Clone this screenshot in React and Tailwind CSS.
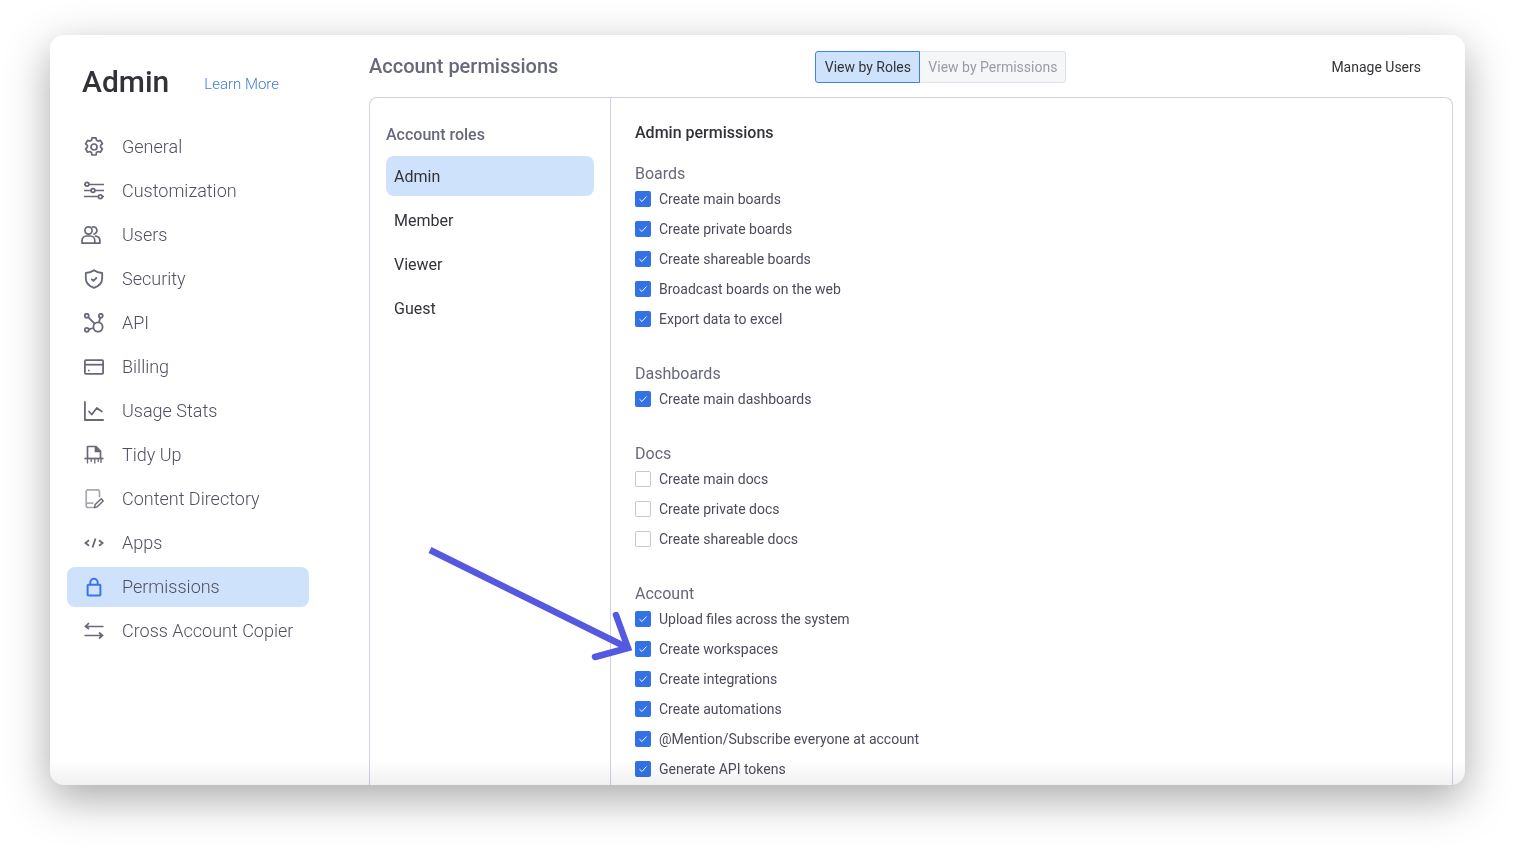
import React from "react";

const GearIcon = () => (
  <svg width="20" height="20" viewBox="0 0 20 20" fill="none" stroke="currentColor" strokeWidth="1.7" strokeLinejoin="round">
    <path d="M8 .9h4l.5 2.3 1.6.9 2.3-.7 2 3.4-1.8 1.6v1.8l1.8 1.6-2 3.4-2.3-.7-1.6.9-.5 2.6H8l-.5-2.6-1.6-.9-2.3.7-2-3.4 1.8-1.6V8.4L1.6 6.8l2-3.4 2.3.7 1.6-.9z" />
    <circle cx="10" cy="10" r="3" />
  </svg>
);

const SlidersIcon = () => (
  <svg width="20" height="20" viewBox="0 0 20 20" fill="none" stroke="currentColor" strokeWidth="1.7">
    <path d="M5 3.5h15M0 3.5h1.2M0 9.5h7M11 9.5h9M0 15.5h14.5M18.2 15.5H20" />
    <circle cx="3" cy="3.3" r="1.9" />
    <circle cx="9" cy="9.5" r="1.9" />
    <circle cx="16.3" cy="15.7" r="1.9" />
  </svg>
);

const UsersIcon = () => (
  <svg width="20" height="20" viewBox="0 0 20 20" fill="none" stroke="currentColor" strokeWidth="1.7" strokeLinejoin="round" strokeLinecap="round">
    <circle cx="7.5" cy="5.5" r="3.6" />
    <path d="M1 18.2v-2.6c0-2.8 2-4.6 4.3-4.6h4.2c2.4 0 4.3 2 4.3 4.6v2.6z" />
    <path d="M11.3 2a3.6 3.6 0 1 1 1.6 7M14.5 11.2c2.6.2 4.4 2 4.4 4.5v2.5h-5" />
  </svg>
);

const ShieldIcon = () => (
  <svg width="20" height="20" viewBox="0 0 20 20" fill="none" stroke="currentColor" strokeWidth="1.8" strokeLinecap="round" strokeLinejoin="round">
    <path d="M10 1.2c2.4 1.8 5 2.6 8.2 2.8v5.2c0 4.4-3.2 7.8-8.2 9.6-5-1.8-8.2-5.2-8.2-9.6V4C5 3.8 7.6 3 10 1.2z" />
    <path d="M7.8 10.4l1.6 1.4 2.9-2.8" />
  </svg>
);

const ApiIcon = () => (
  <svg width="20" height="20" viewBox="0 0 20 20" fill="none" stroke="currentColor" strokeWidth="1.8">
    <circle cx="2.8" cy="2.8" r="2" />
    <circle cx="2.8" cy="16.8" r="2" />
    <circle cx="16.8" cy="2.8" r="2" />
    <circle cx="14" cy="14" r="4.6" />
    <path d="M4.3 4.3l6.4 6.4M4.8 16.4l4.6-1.4M16.2 4.8l-1.2 4.6" />
  </svg>
);

const BillingIcon = () => (
  <svg width="20" height="20" viewBox="0 0 20 20" fill="none" stroke="currentColor" strokeWidth="1.8">
    <rect x="0.9" y="3.2" width="18.2" height="13.6" rx="1" />
    <path d="M1 7.7h18" />
    <path d="M4 13.5h1.6" strokeWidth="1.4" />
  </svg>
);

const ChartIcon = () => (
  <svg width="20" height="20" viewBox="0 0 20 20" fill="none" stroke="currentColor" strokeWidth="1.8" strokeLinecap="round" strokeLinejoin="round">
    <path d="M0.9 1v18h18.2" />
    <path d="M5 10.5l2.8 3 5-6.5 5 3.5" />
  </svg>
);

const TidyIcon = () => (
  <svg width="20" height="20" viewBox="0 0 20 20" fill="none" stroke="currentColor" strokeWidth="1.7" strokeLinejoin="round">
    <path d="M3.5 13V1.5h8.5l4.5 4.5v7" />
    <path d="M11.5 1.5v5h5" fill="currentColor" />
    <path d="M0.5 13.5h19" />
    <path d="M3.5 14v4.5M7.2 14v3M10.8 14v4.5M14.2 14v3M17 14v4" strokeWidth="1.3" />
  </svg>
);

const ContentIcon = () => (
  <svg width="20" height="20" viewBox="0 0 20 20" fill="none" strokeLinejoin="round">
    <path d="M10 18.5H4.2a2 2 0 0 1-2-2V2.8a2 2 0 0 1 2-2h9.3a2 2 0 0 1 2 2v5.5" stroke="#a6a8b5" strokeWidth="1.7" />
    <path d="M2.5 14.2h7" stroke="#a6a8b5" strokeWidth="1.7" />
    <path d="M10.5 18.7l.7-3.2 6-5.7 2 2.2-6 5.8z" stroke="#676879" strokeWidth="1.4" />
  </svg>
);

const CodeIcon = () => (
  <svg width="20" height="20" viewBox="0 0 20 20" fill="none" stroke="currentColor" strokeWidth="1.8">
    <path d="M5 7.2l-3.6 2.8L5 12.8M15 7.2l3.6 2.8-3.6 2.8M11.5 5.5l-3 9" />
  </svg>
);

const LockIcon = () => (
  <svg width="20" height="20" viewBox="0 0 20 20" fill="none" stroke="#3b74e8" strokeWidth="2">
    <rect x="3.6" y="7.8" width="12.8" height="10.6" rx="0.6" />
    <path d="M6.3 7.8V5.5a3.7 3.7 0 0 1 7.4 0v2.3" />
  </svg>
);

const SwapIcon = () => (
  <svg width="20" height="20" viewBox="0 0 20 20" fill="none" stroke="currentColor" strokeWidth="1.7">
    <path d="M19.5 5.5H1.5M5 2L1.5 5.5 5 8" />
    <path d="M0.5 14.5h18M15 11.5l3.5 3-3.5 3" />
  </svg>
);

const CheckBox = ({ checked }) =>
  checked ? (
    <span className="flex h-4 w-4 shrink-0 items-center justify-center rounded-[2px] bg-[#3271e6]">
      <svg width="10" height="10" viewBox="0 0 10 10" fill="none" stroke="#fff" strokeWidth="1">
        <path d="M1.5 5.2l2.4 2.3 4.6-5" />
      </svg>
    </span>
  ) : (
    <span className="h-4 w-4 shrink-0 rounded-[2px] border border-[#c5c7d4] bg-white" />
  );

const navItems = [
  { label: "General", icon: <GearIcon /> },
  { label: "Customization", icon: <SlidersIcon /> },
  { label: "Users", icon: <UsersIcon />, shift: true },
  { label: "Security", icon: <ShieldIcon /> },
  { label: "API", icon: <ApiIcon /> },
  { label: "Billing", icon: <BillingIcon /> },
  { label: "Usage Stats", icon: <ChartIcon /> },
  { label: "Tidy Up", icon: <TidyIcon /> },
  { label: "Content Directory", icon: <ContentIcon /> },
  { label: "Apps", icon: <CodeIcon /> },
  { label: "Permissions", icon: <LockIcon />, active: true },
  { label: "Cross Account Copier", icon: <SwapIcon /> },
];

const roles = ["Admin", "Member", "Viewer", "Guest"];

const groups = [
  {
    title: "Boards",
    items: [
      ["Create main boards", true],
      ["Create private boards", true],
      ["Create shareable boards", true],
      ["Broadcast boards on the web", true],
      ["Export data to excel", true],
    ],
  },
  { title: "Dashboards", items: [["Create main dashboards", true]] },
  {
    title: "Docs",
    items: [
      ["Create main docs", false],
      ["Create private docs", false],
      ["Create shareable docs", false],
    ],
  },
  {
    title: "Account",
    items: [
      ["Upload files across the system", true],
      ["Create workspaces", true],
      ["Create integrations", true],
      ["Create automations", true],
      ["@Mention/Subscribe everyone at account", true],
      ["Generate API tokens", true],
    ],
  },
];

const App = () => {
  return (
    <div className="h-[850px] w-[1515px] overflow-hidden bg-white px-[50px] pt-[35px] font-['Roboto',sans-serif]">
      <div className="relative flex h-[750px] overflow-hidden rounded-[14px] bg-white shadow-[0_14px_44px_rgba(0,0,0,0.34)]">
        {/* Sidebar */}
        <aside className="w-[319px] shrink-0 pl-[17px]">
          <div className="flex h-[92px] items-start pl-[15px] pt-[28px]">
            <h1 className="text-[30px] font-medium leading-[38px] text-[#323338]">Admin</h1>
            <a className="ml-[35px] mt-[10px] text-[15px] font-light leading-[22px] text-[#3f7ed4]">Learn More</a>
          </div>
          <nav className="flex w-[242px] flex-col gap-1">
            {navItems.map((item) => (
              <div
                key={item.label}
                className={`flex h-10 items-center rounded-lg text-[#676879] ${item.active ? "bg-[#cfe2fb]" : ""}`}
              >
                <span className={`flex w-5 justify-center ${item.shift ? "ml-[14px] mr-[21px]" : "ml-[17px] mr-[18px]"}`}>
                  {item.icon}
                </span>
                <span className="text-[18px] font-light leading-6 text-[#4f5060]">{item.label}</span>
              </div>
            ))}
          </nav>
        </aside>

        {/* Main */}
        <main className="flex min-w-0 flex-1 flex-col pr-3">
          <header className="relative flex h-[62px] shrink-0 items-start">
            <h2 className="mt-[18px] text-[20px] font-medium leading-[26px] text-[#676879]">Account permissions</h2>
            <div className="ml-[257px] mt-4 flex h-8 text-[14px] leading-5">
              <button className="w-[105px] rounded-l-[3px] border border-[#3f7fe8] bg-[#cfe2fb] text-[#323338]">
                View by Roles
              </button>
              <button className="w-[146px] rounded-r-[3px] border border-l-0 border-[#e0e1ea] bg-[#f5f6f8] text-[#9a9ba5]">
                View by Permissions
              </button>
            </div>
            <a className="ml-[265px] mt-[22px] text-[14px] leading-5 text-[#323338]">Manage Users</a>
          </header>

          <div className="flex min-h-0 flex-1 rounded-t-lg border border-b-0 border-[#d0d1e2]">
            <div className="w-[241px] shrink-0 border-r border-[#d0d1e2] px-4 pt-[27px]">
              <h3 className="text-[16px] font-medium leading-5 text-[#676879]">Account roles</h3>
              <div className="mt-[11px] flex flex-col gap-1">
                {roles.map((role, index) => (
                  <div
                    key={role}
                    className={`flex h-10 items-center rounded-lg px-2 pt-px text-[16px] text-[#323338] ${index === 0 ? "bg-[#cfe2fb]" : ""}`}
                  >
                    {role}
                  </div>
                ))}
              </div>
            </div>

            <div className="min-w-0 flex-1 pl-6 pt-[25px]">
              <h3 className="text-[16px] font-medium leading-5 text-[#323338]">Admin permissions</h3>
              <div className="mt-[21px] flex flex-col gap-[30px]">
                {groups.map((group) => (
                  <section key={group.title}>
                    <h4 className="text-[16px] leading-5 text-[#676879]">{group.title}</h4>
                    <ul>
                      {group.items.map(([label, checked]) => (
                        <li key={label} className="flex h-[30px] items-center gap-2 text-[14px] text-[#4b4c5a]">
                          <CheckBox checked={checked} />
                          {label}
                        </li>
                      ))}
                    </ul>
                  </section>
                ))}
              </div>
            </div>
          </div>
        </main>

        {/* arrow annotation */}
        <svg className="absolute left-[375px] top-[505px]" width="215" height="125" viewBox="0 0 215 125" fill="none" stroke="#5558e0" strokeWidth="6.5">
          <path d="M5 10l198 98" />
          <path d="M191 75l12 33-33 9" strokeLinecap="round" />
        </svg>

        {/* soft fade along the bottom edge */}
        <div className="pointer-events-none absolute inset-x-0 bottom-0 h-6 bg-gradient-to-b from-white to-[#f0f0f0] mix-blend-multiply" />
      </div>
    </div>
  );
};

export default App;
